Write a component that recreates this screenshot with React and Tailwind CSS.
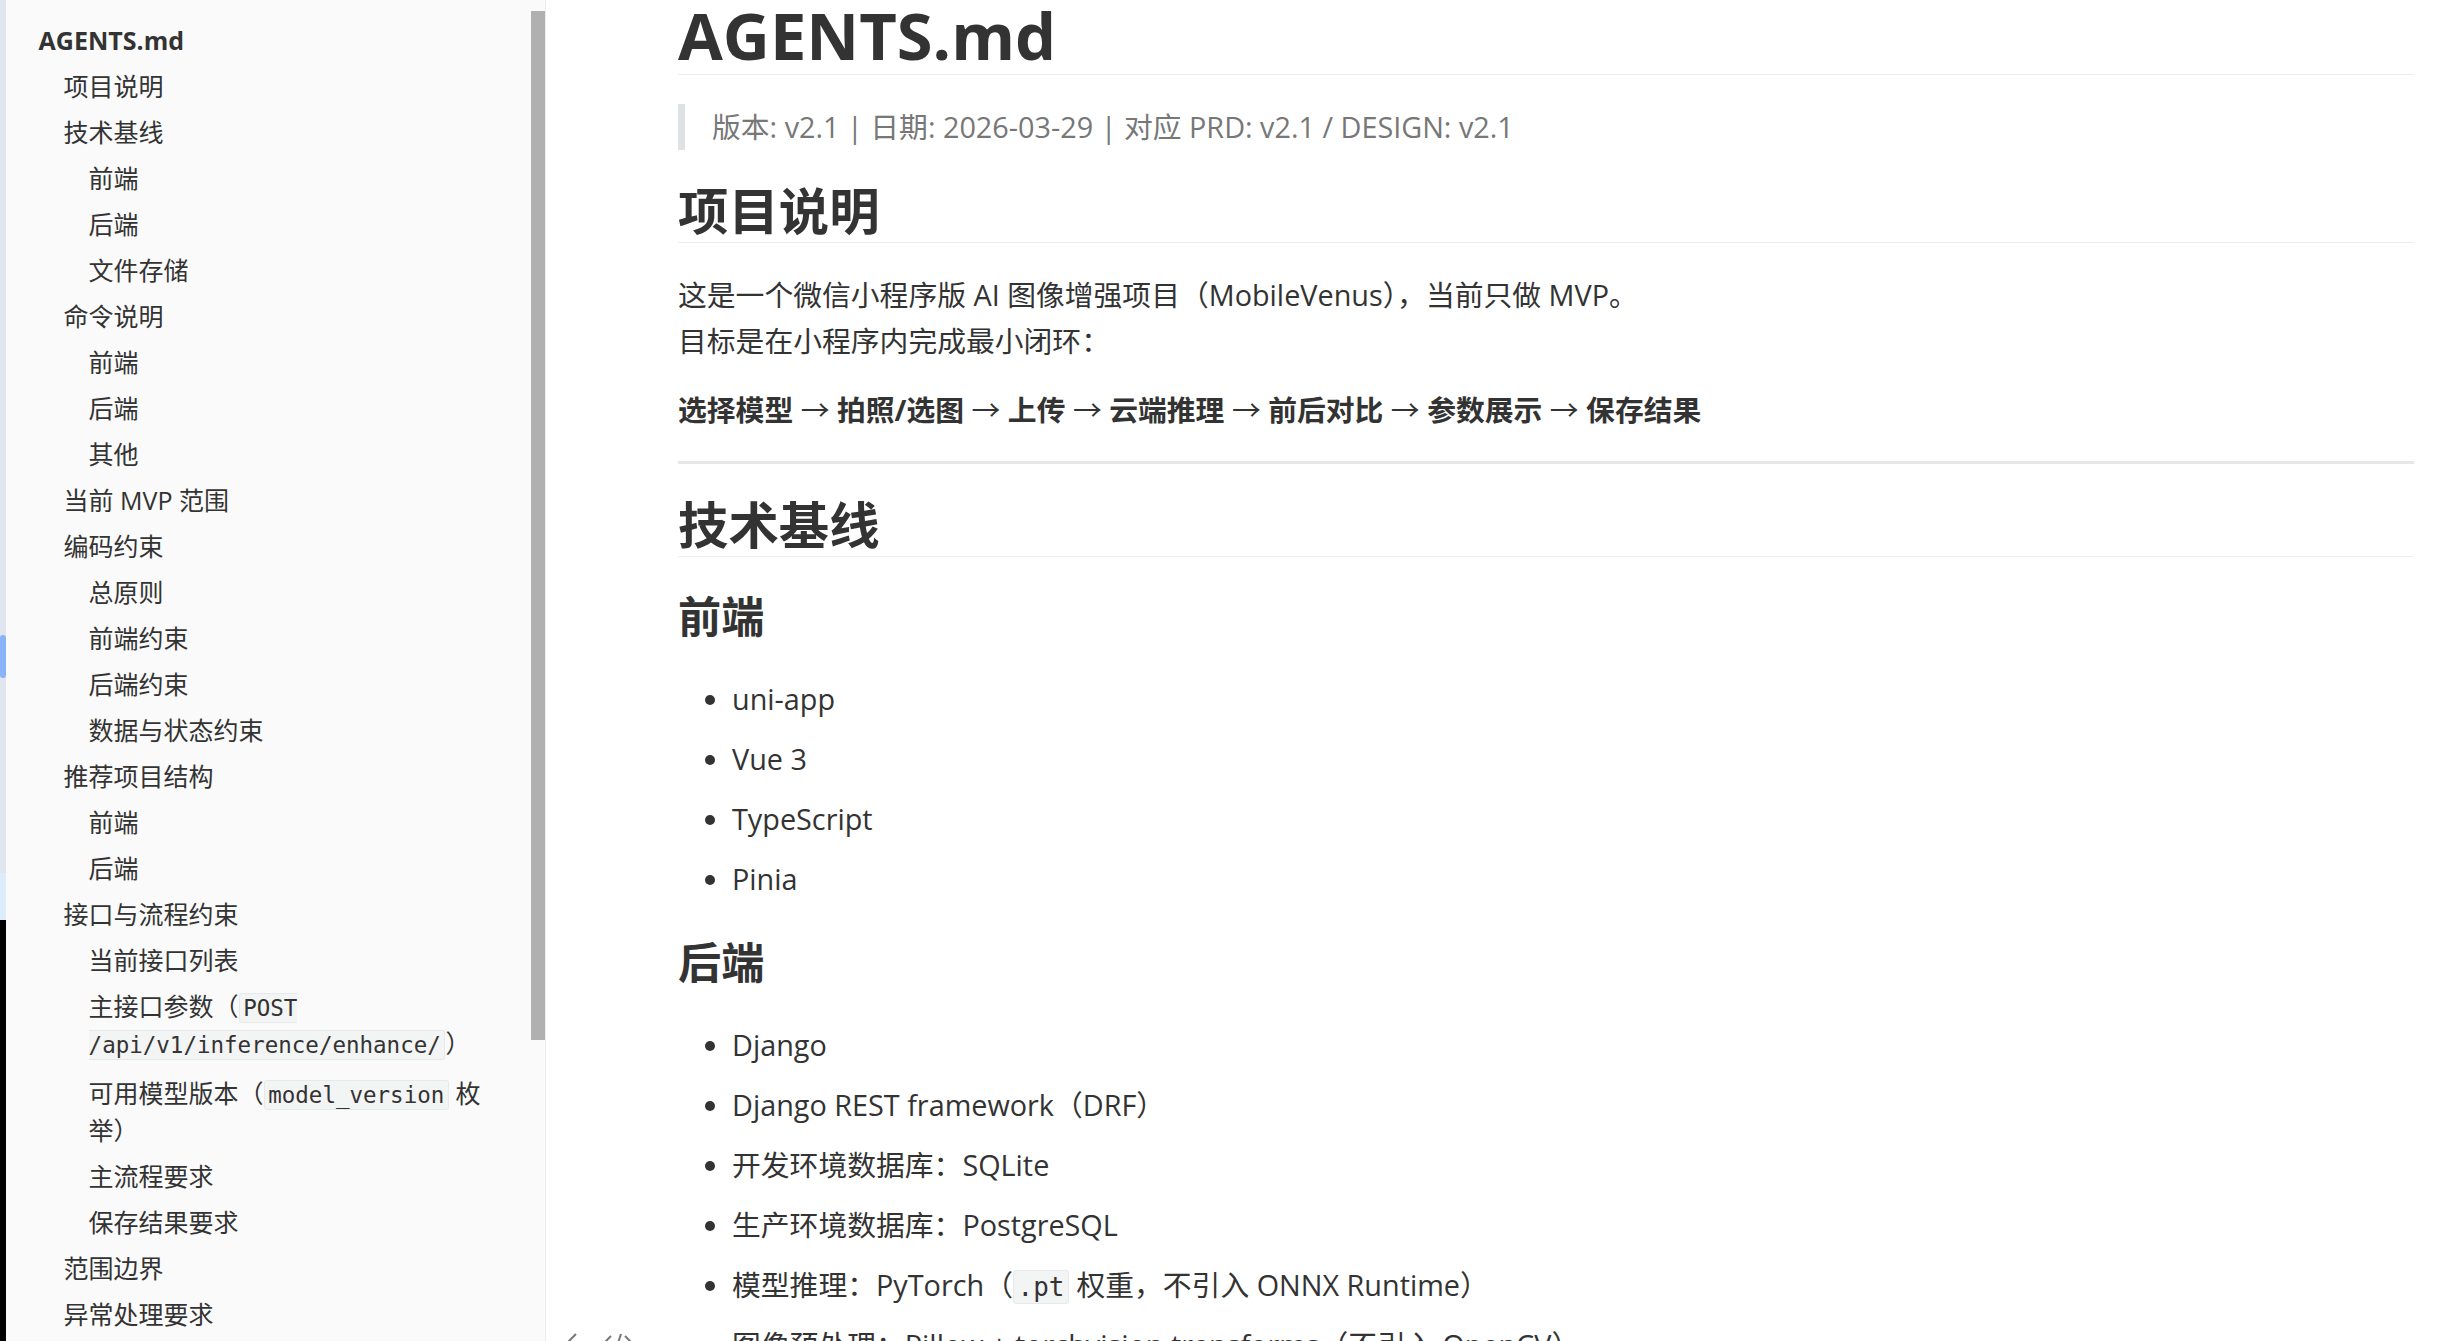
import React from 'react';

/**
 * Typora-like markdown viewer: outline sidebar + document pane
 */

const sans = "font-['Open_Sans','Noto_Sans_CJK_SC',sans-serif]";
const mono = "font-['DejaVu_Sans_Mono','Liberation_Mono',monospace]";

function Code({ children }) {
  return (
    <code className={`${mono} text-[0.9em] leading-none bg-[#f3f4f4] border border-[#e7eaed] rounded-[3px] px-[3.6px] py-[1px]`}>
      {children}
    </code>
  );
}

const outline = [
  { lvl: 1, t: 'AGENTS.md' },
  { lvl: 2, t: '项目说明' },
  { lvl: 2, t: '技术基线' },
  { lvl: 3, t: '前端' },
  { lvl: 3, t: '后端' },
  { lvl: 3, t: '文件存储' },
  { lvl: 2, t: '命令说明' },
  { lvl: 3, t: '前端' },
  { lvl: 3, t: '后端' },
  { lvl: 3, t: '其他' },
  { lvl: 2, t: '当前 MVP 范围' },
  { lvl: 2, t: '编码约束' },
  { lvl: 3, t: '总原则' },
  { lvl: 3, t: '前端约束' },
  { lvl: 3, t: '后端约束' },
  { lvl: 3, t: '数据与状态约束' },
  { lvl: 2, t: '推荐项目结构' },
  { lvl: 3, t: '前端' },
  { lvl: 3, t: '后端' },
  { lvl: 2, t: '接口与流程约束' },
  { lvl: 3, t: '当前接口列表' },
  {
    lvl: 3,
    tall: true,
    t: (
      <>
        主接口参数（<Code>POST <span className="whitespace-nowrap">/api/v1/inference/enhance/</span></Code>）
      </>
    ),
  },
  {
    lvl: 3,
    t: (
      <>
        可用模型版本（<Code>model_version</Code> 枚举）
      </>
    ),
  },
  { lvl: 3, t: '主流程要求' },
  { lvl: 3, t: '保存结果要求' },
  { lvl: 2, t: '范围边界' },
  { lvl: 2, t: '异常处理要求' },
];

const indent = { 1: 'pl-0 font-bold', 2: 'pl-[25px]', 3: 'pl-[50px]' };

function Sidebar() {
  return (
    <aside className="w-[540px] shrink-0 bg-[#fafafa] border-r border-[#ececec] flex">
      <ul className="flex-1 pt-[17px] pl-[32.6px] pr-[31px] text-[25px] leading-[37px] text-[#333]">
        {outline.map((o, i) => (
          <li key={i} className={`${o.tall ? 'pt-[4.5px] pb-[9px]' : 'py-[4.5px]'} ${indent[o.lvl]}`}>
            {o.t}
          </li>
        ))}
      </ul>
      <div className="w-[14px] pt-[11px]">
        <div className="h-[1029px] bg-[#b0b0b0]" />
      </div>
    </aside>
  );
}

function Bullets({ items }) {
  return (
    <ul className="list-disc pl-[54px] mt-[28px] space-y-[14px]">
      {items.map((it, i) => (
        <li key={i} className="leading-[46px]">
          {it}
        </li>
      ))}
    </ul>
  );
}

const flow = ['选择模型', '拍照/选图', '上传', '云端推理', '前后对比', '参数展示', '保存结果'];

function Document() {
  return (
    <main className="flex-1 bg-white relative overflow-hidden">
      <article className="ml-[132px] w-[1736px] text-[28.8px] leading-[46px] text-[#333]">
        <h1 className="-mt-[4px] text-[65px] leading-[78px] font-bold border-b border-[#eeeeee]">AGENTS.md</h1>

        <blockquote className="mt-[29px] border-l-[7px] border-[#dfe2e5] pl-[27px] text-[#777]">
          版本: v2.1 | 日期: 2026-03-29 | 对应 PRD: v2.1 / DESIGN: v2.1
        </blockquote>

        <h2 className="mt-[30px] text-[50.4px] leading-[62px] font-bold border-b border-[#eeeeee]">项目说明</h2>

        <p className="mt-[29px]">
          这是一个微信小程序版 AI 图像增强项目（MobileVenus），当前只做 MVP。
          <br />
          目标是在小程序内完成最小闭环：
        </p>

        <p className="mt-[23px] font-bold">
          {flow.map((s, i) => (
            <React.Fragment key={s}>
              {i > 0 && <span className="font-normal"> → </span>}
              {s}
            </React.Fragment>
          ))}
        </p>

        <hr className="mt-[28px] h-[3px] border-0 bg-[#e7e7e7]" />

        <h2 className="mt-[30px] text-[50.4px] leading-[62px] font-bold border-b border-[#eeeeee]">技术基线</h2>

        <h3 className="mt-[29px] text-[43.2px] leading-[62px] font-bold">前端</h3>
        <Bullets items={['uni-app', 'Vue 3', 'TypeScript', 'Pinia']} />

        <h3 className="mt-[30px] text-[43.2px] leading-[62px] font-bold">后端</h3>
        <Bullets
          items={[
            'Django',
            'Django REST framework（DRF）',
            '开发环境数据库：SQLite',
            '生产环境数据库：PostgreSQL',
            <>
              模型推理：PyTorch（<Code>.pt</Code> 权重，不引入 ONNX Runtime）
            </>,
            '图像预处理：Pillow + torchvision.transforms（不引入 OpenCV）',
          ]}
        />
      </article>

      {/* floating footer buttons (mostly below the fold) */}
      <div className="absolute left-[18px] bottom-[-14px] flex items-center gap-[22px] text-[#777]">
        <svg width="16" height="24" viewBox="0 0 16 24" fill="none" stroke="currentColor" strokeWidth="2">
          <path d="M12 3 L3 12 L12 21" />
        </svg>
        <svg width="32" height="24" viewBox="0 0 32 24" fill="none" stroke="currentColor" strokeWidth="2">
          <path d="M9 5 L2 12 L9 19" />
          <path d="M19 3 L13 21" />
          <path d="M23 5 L30 12 L23 19" />
        </svg>
      </div>
    </main>
  );
}

export default function App() {
  return (
    <div className={`flex w-[2442px] h-[1341px] overflow-hidden ${sans}`}>
      {/* window edge behind */}
      <div className="w-[6px] shrink-0 flex flex-col">
        <div className="h-[873px] bg-[#e1e5ef] pt-[635px]">
          <div className="h-[43px] rounded-[3px] bg-[#8ab4f8]" />
        </div>
        <div className="h-[47px] bg-[#ddecfa]" />
        <div className="flex-1 bg-black" />
      </div>
      <Sidebar />
      <Document />
    </div>
  );
}
